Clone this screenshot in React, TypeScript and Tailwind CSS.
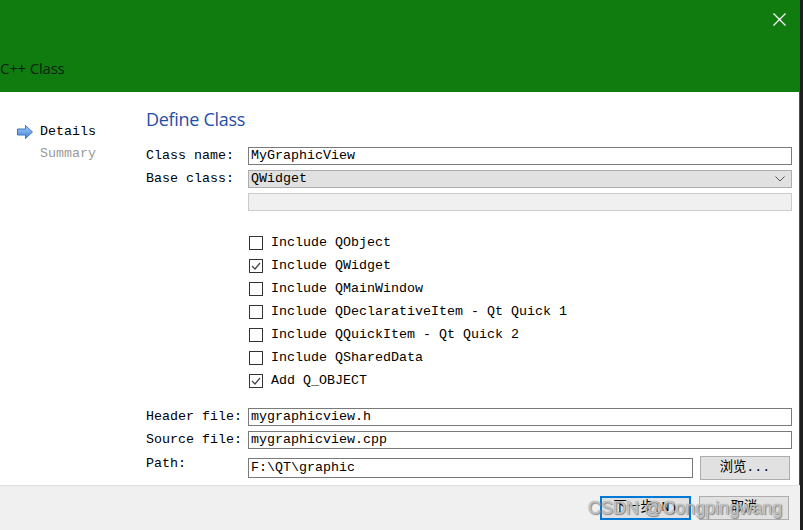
import type { ReactNode } from 'react'

const MONO = "font-['Liberation_Mono','Noto_Sans_CJK_SC',monospace] text-[13.33px] leading-[16px]"

const OPTIONS = [
  { label: 'Include QObject', checked: false },
  { label: 'Include QWidget', checked: true },
  { label: 'Include QMainWindow', checked: false },
  { label: 'Include QDeclarativeItem - Qt Quick 1', checked: false },
  { label: 'Include QQuickItem - Qt Quick 2', checked: false },
  { label: 'Include QSharedData', checked: false },
  { label: 'Add Q_OBJECT', checked: true },
]

function Field({ label, children }: { label: string; children: ReactNode }) {
  return (
    <div className="flex items-center h-[18px]">
      <span className="w-[102px] shrink-0 text-black">{label}</span>
      {children}
    </div>
  )
}

function TextInput({ value }: { value: string }) {
  return (
    <div className="flex-1 h-[18px] border border-[#7a7a7a] bg-white px-[2px] flex items-center text-black">
      {value}
    </div>
  )
}

function CheckBox({ checked }: { checked: boolean }) {
  return (
    <div className="w-[14px] h-[14px] border border-[#333] bg-white flex items-center justify-center">
      {checked && (
        <svg width="10" height="8" viewBox="0 0 10 8">
          <path d="M1 4 L4 7 L9 1" fill="none" stroke="#444" strokeWidth="1.2" />
        </svg>
      )}
    </div>
  )
}

export default function App() {
  return (
    <div className="w-[803px] h-[530px] flex bg-[#1f1f1f] overflow-hidden">
      <div className="w-[800px] h-full flex flex-col">
        {/* title bar */}
        <div className="h-[92px] bg-[#107c10] flex flex-col relative">
          <svg className="absolute left-[773px] top-[13px]" width="13" height="13" viewBox="0 0 13 13">
            <path d="M0.5 0.5 L12.5 12.5 M12.5 0.5 L0.5 12.5" stroke="#fff" strokeWidth="1.3" />
          </svg>
          <div className="mt-[58px] text-[15px] leading-[20px] text-[#0c1f0c] font-['Open_Sans',sans-serif] tracking-[-0.2px]">
            C++ Class
          </div>
        </div>

        {/* body */}
        <div className={`flex-1 bg-white flex border-r border-[#107c10] ${MONO}`}>
          <div className="w-[146px] shrink-0 pt-[32px] pl-[17px] flex flex-col gap-[6px]">
            <div className="flex items-center h-[16px] gap-[7px]">
              <svg width="16" height="14" viewBox="0 0 16 14">
                <defs>
                  <linearGradient id="ar" x1="0" y1="0" x2="0" y2="1">
                    <stop offset="0" stopColor="#a9cdf5" />
                    <stop offset="1" stopColor="#3c82dc" />
                  </linearGradient>
                </defs>
                <path d="M0.5 4 H8.5 V0.5 L15.5 7 L8.5 13.5 V10 H0.5 Z" fill="url(#ar)" stroke="#3a78c8" strokeWidth="1" />
              </svg>
              <span className="text-black">Details</span>
            </div>
            <div className="pl-[23px] text-[#9a9a9a] h-[16px]">Summary</div>
          </div>

          <div className="flex-1 pr-[7px] flex flex-col">
            <div className="mt-[15px] text-[18px] leading-[24px] text-[#1f4fa8] font-['Open_Sans',sans-serif] tracking-[-0.3px]">
              Define Class
            </div>

            <div className="mt-[16px] flex flex-col gap-[5px]">
              <Field label="Class name:">
                <TextInput value="MyGraphicView" />
              </Field>
              <Field label="Base class:">
                <div className="flex-1 h-[18px] border border-[#adadad] bg-[#e1e1e1] px-[2px] flex items-center justify-between text-black">
                  <span>QWidget</span>
                  <svg width="10" height="6" viewBox="0 0 10 6" className="mr-[4px]">
                    <path d="M0.5 0.5 L5 5 L9.5 0.5" fill="none" stroke="#555" strokeWidth="1" />
                  </svg>
                </div>
              </Field>
              <Field label="">
                <div className="flex-1 h-[18px] border border-[#cccccc] bg-[#f0f0f0]" />
              </Field>
            </div>

            <div className="mt-[20px] pl-[102px] flex flex-col">
              {OPTIONS.map((o) => (
                <div key={o.label} className="h-[23px] flex items-center gap-[8px] pl-[1px]">
                  <CheckBox checked={o.checked} />
                  <span className="text-black">{o.label}</span>
                </div>
              ))}
            </div>

            <div className="mt-[16px] flex flex-col gap-[5px]">
              <Field label="Header file:">
                <TextInput value="mygraphicview.h" />
              </Field>
              <Field label="Source file:">
                <TextInput value="mygraphicview.cpp" />
              </Field>
            </div>

            <div className="mt-[7px] flex items-start h-[24px]">
              <span className="w-[102px] shrink-0 text-black">Path:</span>
              <div className="flex-1 mt-[2px] h-[20px] border border-[#7a7a7a] bg-white px-[2px] flex items-center text-black">
                F:\QT\graphic
              </div>
              <button className="ml-[7px] w-[90px] h-[24px] border border-[#adadad] bg-[#e1e1e1] text-black flex items-center justify-center">
                浏览...
              </button>
              <div className="w-[2px]" />
            </div>
          </div>
        </div>

        {/* footer */}
        <div className={`h-[45px] bg-[#f0f0f0] border-t border-[#dfdfdf] relative flex items-center justify-end pr-[11px] gap-[8px] ${MONO}`}>
          <button className="w-[91px] h-[24px] border-2 border-[#0078d7] bg-[#e1e1e1] text-black flex items-center justify-center">
            下一步(N)
          </button>
          <button className="w-[90px] h-[24px] border border-[#adadad] bg-[#e1e1e1] text-black flex items-center justify-center">
            取消
          </button>
          <div className="absolute left-[588px] top-[10px] text-[18px] leading-[24px] font-['Liberation_Sans',Arial,sans-serif] text-[#d8d8d8]/80 [text-shadow:0_0_1px_#777,1px_1px_1px_#888] pointer-events-none">
            CSDN @Congpingwang
          </div>
        </div>
      </div>
      <div className="w-[3px]" />
    </div>
  )
}
